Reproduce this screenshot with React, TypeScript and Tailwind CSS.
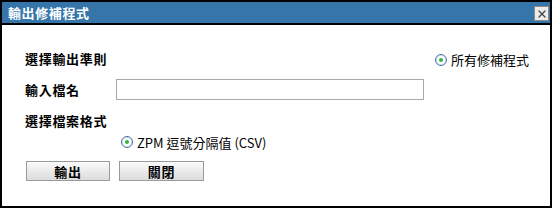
import { X } from "lucide-react"

function Radio() {
  return (
    <span className="inline-flex h-[12px] w-[12px] items-center justify-center rounded-full border border-[#4a6fa0] bg-white shadow-[inset_0_0_0_1px_#d8e2ee]">
      <span className="h-[4px] w-[4px] rounded-full bg-[#2fb53a]" />
    </span>
  )
}

export default function App() {
  const font = { fontFamily: '"Noto Sans CJK TC", "Liberation Sans", sans-serif' }
  return (
    <div className="flex h-[208px] w-[552px] flex-col border-2 border-black bg-white" style={font}>
      <div className="flex h-[23px] shrink-0 items-center justify-between border-b-2 border-black bg-[#3575aa] pl-[6px] pr-[1px]">
        <span className="text-[13px] font-bold leading-none tracking-[0.6px] text-white">輸出修補程式</span>
        <button className="mt-[2px] flex h-[15px] w-[15px] items-center justify-center border border-[#8a8a8a] bg-[#ececec]">
          <X className="h-[12px] w-[12px] text-[#444]" strokeWidth={2.5} />
        </button>
      </div>
      <div className="flex flex-col pl-[23px] pr-[21px] pt-[21px] text-[13px] leading-none text-black">
        <div className="flex h-[24px] items-center justify-between">
          <span className="font-bold tracking-[0.7px]">選擇輸出準則</span>
          <label className="mt-[3px] flex items-center gap-[4px]">
            <Radio />
            <span>所有修補程式</span>
          </label>
        </div>
        <div className="mt-[9px] flex h-[21px] items-center">
          <span className="w-[91px] font-bold tracking-[0.7px]">輸入檔名</span>
          <input className="h-[21px] w-[308px] border border-[#a8a8a8] bg-white px-1 outline-none" />
        </div>
        <div className="mt-[10px] flex h-[20px] items-center">
          <span className="font-bold tracking-[0.7px]">選擇檔案格式</span>
        </div>
        <div className="mt-[3px] flex h-[18px] items-center pl-[96px]">
          <label className="flex items-center gap-[4px]">
            <Radio />
            <span>ZPM 逗號分隔值 (CSV)</span>
          </label>
        </div>
        <div className="mt-[10px] flex gap-[9px] pl-[1px]">
          <button className="h-[20px] w-[84px] border border-[#9a9a9a] bg-gradient-to-b from-[#fafafa] to-[#dcdcdc] text-[13px] font-bold leading-none tracking-[0.7px]">
            輸出
          </button>
          <button className="h-[20px] w-[85px] border border-[#9a9a9a] bg-gradient-to-b from-[#fafafa] to-[#dcdcdc] text-[13px] font-bold leading-none tracking-[0.7px]">
            關閉
          </button>
        </div>
      </div>
    </div>
  )
}
